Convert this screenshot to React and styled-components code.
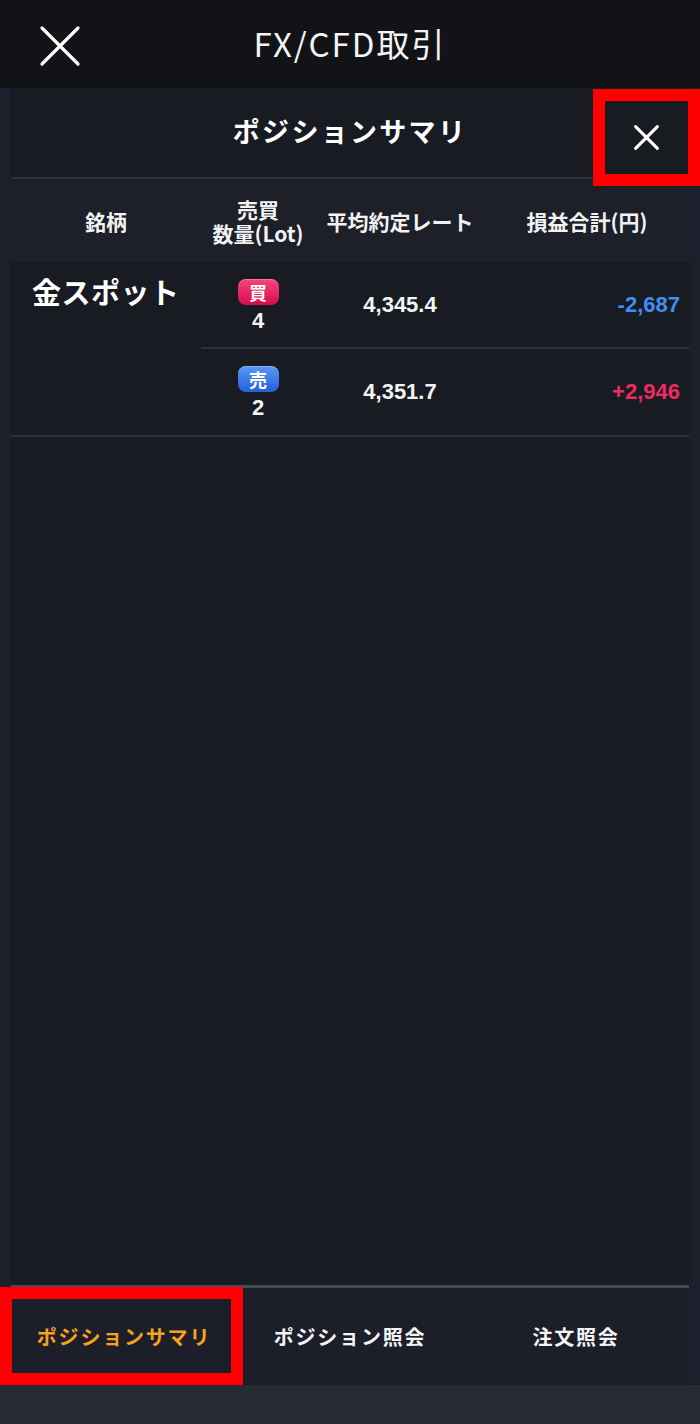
import styled, { createGlobalStyle } from "styled-components";

const GlobalStyle = createGlobalStyle`
  html, body {
    margin: 0;
    padding: 0;
    background: #1d202c;
  }
  * {
    box-sizing: border-box;
  }
  body {
    font-family: "Liberation Sans", "Noto Sans CJK JP", sans-serif;
    color: #fff;
  }
`;

const positions = [
  { id: 1, side: "buy", qty: 4, rate: "4,345.4", pl: "-2,687" },
  { id: 2, side: "sell", qty: 2, rate: "4,351.7", pl: "+2,946" },
];

const Screen = styled.div`
  width: 700px;
  height: 1424px;
  display: flex;
  flex-direction: column;
  background: #1d202c;
  overflow: hidden;
`;

const TopBar = styled.header`
  height: 88px;
  flex-shrink: 0;
  background: #121317;
  display: flex;
  align-items: center;
  justify-content: center;
  position: relative;
`;

const BackButton = styled.button`
  position: absolute;
  left: 34px;
  top: 20px;
  width: 52px;
  height: 52px;
  padding: 0;
  border: 0;
  background: none;
  display: flex;
  align-items: center;
  justify-content: center;
`;

const AppTitle = styled.h1`
  margin: 0 0 2px;
  font-family: "Noto Sans CJK JP", sans-serif;
  font-weight: 400;
  font-size: 33px;
  letter-spacing: 2px;
  color: #f4f4f4;
`;

const Frame = styled.div`
  flex: 1;
  display: flex;
  flex-direction: column;
  padding: 0 11px;
`;

const Panel = styled.section`
  flex: 1;
  display: flex;
  flex-direction: column;
  background: #181b22;
`;

const PanelHeader = styled.div`
  height: 91px;
  flex-shrink: 0;
  display: flex;
  align-items: center;
  justify-content: center;
  border-bottom: 2px solid #2d3039;
  position: relative;
`;

const PanelTitle = styled.h2`
  margin: 0 0 4px;
  font-family: "Noto Sans CJK JP", sans-serif;
  font-weight: 700;
  font-size: 27px;
  letter-spacing: 2.3px;
`;

const CloseButton = styled.button`
  position: absolute;
  right: 1px;
  top: 13px;
  width: 83px;
  height: 73px;
  padding: 0;
  border: 0;
  background: none;
  display: flex;
  align-items: center;
  justify-content: center;

  &::after {
    content: "";
    position: absolute;
    top: -12px;
    left: -12px;
    right: -12px;
    bottom: -12px;
    border: 12px solid #ff0000;
  }
`;

const HeaderRow = styled.div`
  height: 83px;
  display: grid;
  grid-template-columns: 190px 114px 170px 1fr;
  align-items: center;
  background: #1d2028;
`;

const HeadCell = styled.div`
  text-align: center;
  font-family: "Noto Sans CJK JP", sans-serif;
  font-weight: 700;
  font-size: 21px;
  line-height: 24px;
  color: #f2f2f2;
  white-space: nowrap;
`;

const HeadLine = styled.span`
  display: block;
  height: 24px;
`;

const Group = styled.div`
  display: flex;
  border-bottom: 2px solid #2d3039;
`;

const NameCell = styled.div`
  width: 190px;
  padding: 12px 0 0 21px;
  font-family: "Noto Sans CJK JP", sans-serif;
  font-weight: 700;
  font-size: 29px;
  letter-spacing: 0.5px;
  line-height: 34px;
`;

const SubRows = styled.div`
  flex: 1;
  display: flex;
  flex-direction: column;
`;

const SubRow = styled.div`
  height: 87px;
  display: grid;
  grid-template-columns: 114px 170px 1fr;
  align-items: center;
  border-bottom: 2px solid #2d3039;

  &:last-child {
    height: 86px;
    border-bottom: 0;
  }
`;

const SideCell = styled.div`
  display: flex;
  flex-direction: column;
  align-items: center;
  gap: 4px;
  padding-top: 2px;
`;

const Badge = styled.span`
  width: 41px;
  height: 26px;
  border-radius: 8px;
  display: flex;
  align-items: center;
  justify-content: center;
  font-family: "Noto Sans CJK JP", sans-serif;
  font-weight: 700;
  font-size: 18px;
  color: #fff;
  background: ${(p) =>
    p.$side === "buy"
      ? "linear-gradient(#f6457a, #d60c4f)"
      : "linear-gradient(#5a97f5, #2460d8)"};
  box-shadow: inset 0 1px 0 rgba(255, 255, 255, 0.25);
`;

const Num = styled.span`
  font-weight: 700;
  font-size: 22px;
  line-height: 24px;
  color: ${(p) => p.$color || "#f4f4f4"};
  text-align: ${(p) => p.$align || "center"};
  padding-right: ${(p) => (p.$align === "right" ? "9px" : "0")};
`;

const Tabs = styled.nav`
  height: 100px;
  flex-shrink: 0;
  display: grid;
  grid-template-columns: repeat(3, 1fr);
  border-top: 3px solid #464a56;
  background: #1c1f2a;
`;

const Tab = styled.div`
  position: relative;
  display: flex;
  align-items: center;
  justify-content: center;
  font-family: "Noto Sans CJK JP", sans-serif;
  font-weight: 700;
  font-size: 20px;
  letter-spacing: 1.8px;
  color: ${(p) => (p.$active ? "#f7a21b" : "#f4f4f4")};

  ${(p) =>
    p.$active &&
    `
    &::after {
      content: "";
      position: absolute;
      top: -1px;
      left: -11px;
      right: -6px;
      bottom: 0;
      border: 12px solid #ff0000;
    }
  `}
`;

const BottomStrip = styled.div`
  height: 39px;
  flex-shrink: 0;
  background: #272935;
`;

const CrossIcon = ({ size, stroke }) => (
  <svg width={size} height={size} viewBox="0 0 24 24">
    <path
      d="M3 3 L21 21 M21 3 L3 21"
      stroke="#fff"
      strokeWidth={stroke}
      strokeLinecap="round"
      fill="none"
    />
  </svg>
);

export default function App() {
  return (
    <>
      <GlobalStyle />
      <Screen>
        <TopBar>
          <BackButton>
            <CrossIcon size={48} stroke={1.6} />
          </BackButton>
          <AppTitle>FX/CFD取引</AppTitle>
        </TopBar>
        <Frame>
          <Panel>
            <PanelHeader>
              <PanelTitle>ポジションサマリ</PanelTitle>
              <CloseButton>
                <CrossIcon size={29} stroke={2.6} />
              </CloseButton>
            </PanelHeader>
            <HeaderRow>
              <HeadCell>銘柄</HeadCell>
              <HeadCell>
                <HeadLine>売買</HeadLine>
                <HeadLine>数量(Lot)</HeadLine>
              </HeadCell>
              <HeadCell>平均約定レート</HeadCell>
              <HeadCell>損益合計(円)</HeadCell>
            </HeaderRow>
            <Group>
              <NameCell>金スポット</NameCell>
              <SubRows>
                {positions.map((p) => (
                  <SubRow key={p.id}>
                    <SideCell>
                      <Badge $side={p.side}>{p.side === "buy" ? "買" : "売"}</Badge>
                      <Num>{p.qty}</Num>
                    </SideCell>
                    <Num>{p.rate}</Num>
                    <Num
                      $align="right"
                      $color={p.pl.startsWith("-") ? "#3f8ff0" : "#ee2a62"}
                    >
                      {p.pl}
                    </Num>
                  </SubRow>
                ))}
              </SubRows>
            </Group>
          </Panel>
          <Tabs>
            <Tab $active>ポジションサマリ</Tab>
            <Tab>ポジション照会</Tab>
            <Tab>注文照会</Tab>
          </Tabs>
        </Frame>
        <BottomStrip />
      </Screen>
    </>
  );
}
